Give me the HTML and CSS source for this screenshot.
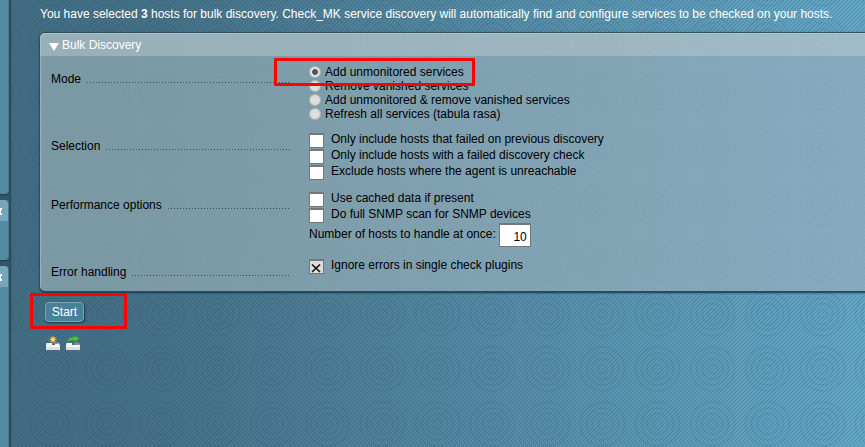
FILE: index.html
```
<!DOCTYPE html>
<html lang="en">
<head>
<meta charset="utf-8">
<title>Bulk Discovery</title>
<link rel="stylesheet" href="styles.css">
</head>
<body>
<svg class="texture" width="865" height="447" aria-hidden="true">
  <defs>
    <pattern id="rings" x="25" y="11" width="55" height="55" patternUnits="userSpaceOnUse">
      <g fill="none" stroke="#153d50" stroke-opacity=".1" stroke-width="1.4">
        <circle cx="27.5" cy="28" r="4.5"/><circle cx="27.5" cy="28" r="10.5"/><circle cx="27.5" cy="28" r="16"/><circle cx="27.5" cy="28" r="22"/>
      </g>
    </pattern>
    <pattern id="weave" width="4" height="4" patternUnits="userSpaceOnUse">
      <path d="M3 0h1v1h-1zM2 1h1v1h-1zM1 2h1v1h-1zM0 3h1v1h-1z" fill="#102f42" fill-opacity=".12"/>
      <path d="M3 0h1v1h-1zM1 2h1v1h-1z" fill="#102f42" fill-opacity=".13"/>
    </pattern>
  </defs>
  <rect width="865" height="447" fill="url(#rings)"/>
  <rect width="865" height="447" fill="url(#weave)"/>
</svg>
<div class="app">
  <aside class="sidebar">
    <div class="snapin first"></div>
    <div class="snapin second"><div class="snaphead"><svg width="3" height="7"><path d="M0 0h2v2h-1v3h1v2h-2v-2h-1v-3h1z" fill="#fff"/></svg></div></div>
    <div class="snapin third"><div class="snaphead"><svg width="3" height="7"><path d="M0 0h2v2h-1v3h1v2h-2v-2h-1v-3h1z" fill="#fff"/></svg></div></div>
  </aside>
  <main>
    <p class="intro">You have selected <b>3</b> hosts for bulk discovery. Check_MK service discovery will automatically find and configure services to be checked on your hosts.</p>
    <form class="panel">
      <div class="head"><i class="arrow"></i><span>Bulk Discovery</span></div>
      <div class="row mode"><div class="legend"><span>Mode</span><i></i></div>
        <div class="fields">
          <label class="radio"><i class="on"></i><span>Add unmonitored services</span></label>
          <label class="radio"><i></i><span>Remove vanished services</span></label>
          <label class="radio"><i></i><span>Add unmonitored &amp; remove vanished services</span></label>
          <label class="radio"><i></i><span>Refresh all services (tabula rasa)</span></label>
        </div></div>
      <div class="row selection"><div class="legend"><span>Selection</span><i></i></div>
        <div class="fields">
          <label class="check"><i></i><span>Only include hosts that failed on previous discovery</span></label>
          <label class="check"><i></i><span>Only include hosts with a failed discovery check</span></label>
          <label class="check"><i></i><span>Exclude hosts where the agent is unreachable</span></label>
        </div></div>
      <div class="row perf"><div class="legend"><span>Performance options</span><i></i></div>
        <div class="fields">
          <label class="check"><i></i><span>Use cached data if present</span></label>
          <label class="check"><i></i><span>Do full SNMP scan for SNMP devices</span></label>
          <label class="number"><span class="caption">Number of hosts to handle at once:</span><span class="value">10</span></label>
        </div></div>
      <div class="row errors"><div class="legend"><span>Error handling</span><i></i></div>
        <div class="fields">
          <label class="check"><i class="checked"><svg width="12" height="12"><path d="M2 3.500l8 7.500M10 3.500l-8 7.500" stroke="#111" stroke-width="1.700"/></svg></i><span>Ignore errors in single check plugins</span></label>
        </div></div>
    </form>
    <div class="start">Start</div>
    <div class="icons">
      <svg width="16" height="16" viewBox="0 0 16 16"><path d="M1.500 8H7v2h3V8h4l1 3v4H1v-4z" fill="#f4f4f4"/><path d="M1 12h14v3H1z" fill="#dedede"/><path d="M9.500 7.500h4v1.500h-4z" fill="#999"/><path d="M8 .8v7.400M4.300 4.500h7.400M5.500 2l5 5M10.500 2l-5 5" stroke="#e08a26" stroke-width="1.500"/><circle cx="8" cy="4.500" r="2" fill="#ffd968"/></svg>
      <svg width="16" height="16" viewBox="0 0 16 16"><path d="M1.500 8H7v2h4V8h3l1 3v4H1v-4z" fill="#f4f4f4"/><path d="M1 12h14v3H1z" fill="#dedede"/><path d="M9 7.500h5v2.500H9z" fill="#888"/><path d="M2.500 7C3 3.500 5.500 2 9.500 2.200V.5L14 3.700l-4.500 3V5C6.500 4.800 4.500 5.200 2.500 7z" fill="#54c735" stroke="#2f9d25" stroke-width=".6"/></svg>
    </div>
  </main>
</div>
<div class="mark mark-mode"></div>
<div class="mark mark-start"></div>
</body>
</html>
```
FILE: styles.css
```
* { box-sizing: border-box; }
body {
  margin: 0; width: 865px; height: 447px; overflow: hidden; position: relative;
  background: linear-gradient(90deg, #426d83 0, #467389 180px, #5f9dbb 740px, #63a6c6 100%);
  font: 12px/14px "Liberation Sans", Arial, sans-serif; color: #000;
}
.texture { position: absolute; left: 0; top: 0; }
.app { position: relative; display: flex; height: 447px; }
.sidebar { width: 10px; flex: none; background: #31566a; box-shadow: 1px 0 1px #2a4c5e; }
.snapin { width: 9px; background: #518aa1; border-right: 1px solid #477b92; box-shadow: 0 1px 2px #18394a; overflow: hidden; }
.first { height: 194px; border-radius: 0 0 4px 0; }
.second { height: 60px; margin-top: 6px; border-radius: 0 4px 4px 0; }
.third { height: 181px; margin-top: 6px; border-radius: 0 4px 0 0; }
.snaphead { height: 21px; background: #76a6ba; padding-top: 8px; }
.snaphead svg { display: block; }
main { flex: none; width: 825px; margin-left: 30px; }
.intro { margin: 7px 0 12px; color: #fff; white-space: nowrap; width: max-content; }
.intro b { font-weight: bold; }
.panel {
  height: 258px; width: 835px; border-radius: 5px 0 0 5px; overflow: hidden;
  background: linear-gradient(90deg, rgba(150,175,182,.68), rgba(155,176,190,.65));
  box-shadow: 0 0 1px 1px #284e60, 0 2px 2px #18394a, inset 1px 1px 0 rgba(200,225,230,.35);
}
.head { height: 23px; display: flex; align-items: center; padding-left: 9px; color: #fff; background: rgba(210,220,220,.34); }
.arrow { border: 5px solid transparent; border-top: 8px solid #fff; border-bottom: 0; margin: 5px 3px 0 0; }
.row { display: flex; padding-left: 11px; }
.legend { display: flex; width: 240px; height: 14px; margin-right: 18px; flex: none; }
.legend i { flex: 1; height: 1px; margin: 10px 0 0 6px; background: repeating-linear-gradient(90deg, #3e4852 0 1px, transparent 1px 3px); }
.fields { display: flex; flex-direction: column; }
.mode { padding-top: 9px; }
.mode .legend { margin-top: 7px; }
.radio { height: 14px; display: flex; }
.radio i { width: 12px; height: 12px; margin: 1px 4px 0 0; border: 1px solid #b5b5b5; border-radius: 50%; background: radial-gradient(circle, #e3e3e3, #d6d6d6); }
.radio .on { background: radial-gradient(circle, #555 0 2.500px, #e2e2e2 3.300px); }
.selection { padding-top: 12px; }
.selection .legend, .perf .legend { margin-top: 6px; }
.check { height: 16px; display: flex; }
.check i { width: 15px; height: 15px; flex: none; margin: 0 7px 0 0; border: 1px solid #777; border-top-width: 2px; background: #fff; }
.check span { margin-top: -1px; }
.check svg { display: block; }
.check .checked { background: #ddd; }
.perf { padding-top: 11px; }
.number { display: flex; height: 24px; }
.caption { margin-top: 3px; }
.value { height: 24px; width: 32px; margin: -1px 0 0 3px; padding: 5px 3px; border: 1px solid #777; border-top-width: 2px; background: #fff; text-align: right; }
.errors { padding-top: 11px; }
.errors .legend { margin-top: 6px; }
.start { width: 39px; height: 20px; margin: 11px 0 0 5px; border: 1px solid #79a4b6; border-radius: 4px; box-shadow: 1px 1px 2px #18394a; background: #4a819a; color: #fff; text-align: center; line-height: 18px; }
.icons { display: flex; gap: 4px; margin: 13px 0 0 5px; }
.mark { position: absolute; border: 3px solid #f00; border-radius: 1px; }
.mark-mode { left: 274px; top: 58px; width: 201px; height: 28px; }
.mark-start { left: 30px; top: 293px; width: 97px; height: 36px; }
```
